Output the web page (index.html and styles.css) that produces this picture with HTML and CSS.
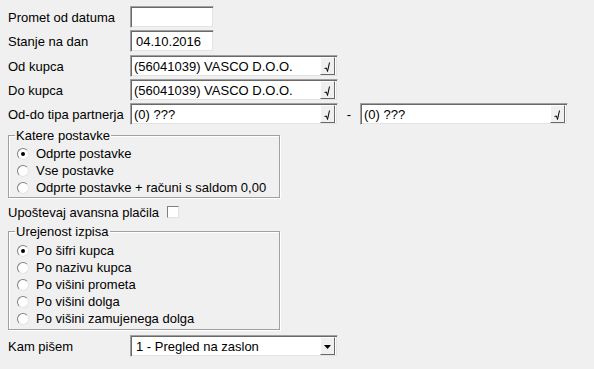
FILE: index.html
```html
<!DOCTYPE html>
<html lang="sl">
<head>
  <meta charset="UTF-8" />
  <title>Odprte postavke kupcev</title>
  <link rel="stylesheet" href="styles.css">
</head>
<body>
  <div class="form">
    <div class="row">
      <span class="label">Promet od datuma</span>
      <div class="field short"></div>
    </div>
    <div class="row">
      <span class="label">Stanje na dan</span>
      <div class="field short">04.10.2016</div>
    </div>
    <div class="row gap3">
      <span class="label">Od kupca</span>
      <div class="field combo"><span class="val">(56041039) VASCO D.O.O.</span><span class="btn"><svg width="7" height="10" viewBox="0 0 7 10"><polyline points="0.5,6.5 2.5,6 3.5,9.5 5.5,0.5" fill="none" stroke="#000" stroke-width="1"/></svg></span></div>
    </div>
    <div class="row">
      <span class="label">Do kupca</span>
      <div class="field combo"><span class="val">(56041039) VASCO D.O.O.</span><span class="btn"><svg width="7" height="10" viewBox="0 0 7 10"><polyline points="0.5,6.5 2.5,6 3.5,9.5 5.5,0.5" fill="none" stroke="#000" stroke-width="1"/></svg></span></div>
    </div>
    <div class="row">
      <span class="label">Od-do tipa partnerja</span>
      <div class="field combo"><span class="val">(0) ???</span><span class="btn"><svg width="7" height="10" viewBox="0 0 7 10"><polyline points="0.5,6.5 2.5,6 3.5,9.5 5.5,0.5" fill="none" stroke="#000" stroke-width="1"/></svg></span></div>
      <span class="dash">-</span>
      <div class="field combo"><span class="val">(0) ???</span><span class="btn"><svg width="7" height="10" viewBox="0 0 7 10"><polyline points="0.5,6.5 2.5,6 3.5,9.5 5.5,0.5" fill="none" stroke="#000" stroke-width="1"/></svg></span></div>
    </div>

    <fieldset class="group first">
      <legend>Katere postavke</legend>
      <div class="opt"><span class="radio on"></span>Odprte postavke</div>
      <div class="opt"><span class="radio"></span>Vse postavke</div>
      <div class="opt"><span class="radio"></span>Odprte postavke + računi s saldom 0,00</div>
    </fieldset>

    <div class="check-row">
      <span>Upoštevaj avansna plačila</span>
      <span class="checkbox"></span>
    </div>

    <fieldset class="group second">
      <legend>Urejenost izpisa</legend>
      <div class="opt"><span class="radio on"></span>Po šifri kupca</div>
      <div class="opt"><span class="radio"></span>Po nazivu kupca</div>
      <div class="opt"><span class="radio"></span>Po višini prometa</div>
      <div class="opt"><span class="radio"></span>Po višini dolga</div>
      <div class="opt"><span class="radio"></span>Po višini zamujenega dolga</div>
    </fieldset>

    <div class="row last">
      <span class="label">Kam pišem</span>
      <div class="field combo select"><span class="val">1 - Pregled na zaslon</span><span class="btn"><svg width="7" height="4" viewBox="0 0 7 4"><polygon points="0,0 7,0 3.5,4" fill="#000"/></svg></span></div>
    </div>
  </div>
</body>
</html>
```

FILE: styles.css
```css
body { margin: 0; background: #f0f0f0; font-family: "Liberation Sans", Arial, sans-serif; font-size: 13px; color: #000; }
.form { padding: 6px 8px; }
.row { display: flex; align-items: center; height: 22px; margin-bottom: 2px; }
.row.gap3 { margin-top: 3px; }
.label { width: 122px; flex: none; white-space: nowrap; }
.field { box-sizing: border-box; height: 22px; background: #fff; border: 1px solid; border-color: #a0a0a0 #f0f0f0 #f0f0f0 #a0a0a0; box-shadow: inset 1px 1px #696969, inset -1px -1px #e3e3e3; display: flex; align-items: center; padding-left: 3px; white-space: nowrap; }
.field.short { width: 84px; padding-left: 5px; }
.field.combo { width: 208px; padding: 2px 2px 2px 3px; }
.val { flex: 1; overflow: hidden; }
.btn { box-sizing: border-box; width: 15px; height: 18px; background: #f0f0f0; border: 1px solid; border-color: #fff #696969 #696969 #fff; display: flex; align-items: center; justify-content: center; padding-top: 2px; }
.select .btn { padding-top: 1px; }
.dash { width: 22px; text-align: center; }
.group { box-sizing: border-box; width: 272px; margin: 3px 0 0; border: 1px solid #a0a0a0; box-shadow: 1px 1px #fff, inset 1px 1px #fff; padding: 2px 6px 1px; }
.group legend { padding: 0 1px; line-height: 15px; }
.group.second { margin-top: 4px; padding-top: 3px; padding-bottom: 2px; }
.opt { display: flex; align-items: center; height: 17px; white-space: nowrap; }
.radio { box-sizing: border-box; width: 12px; height: 12px; border-radius: 50%; background: #fff; border: 1px solid; border-color: #808080 #e3e3e3 #e3e3e3 #808080; margin: 0 7px 0 2px; display: flex; align-items: center; justify-content: center; }
.radio.on::after { content: ""; width: 4px; height: 4px; border-radius: 50%; background: #000; }
.check-row { display: flex; align-items: center; height: 16px; margin-top: 6px; }
.checkbox { box-sizing: border-box; width: 12px; height: 12px; background: #fff; border: 1px solid; border-color: #808080 #e3e3e3 #e3e3e3 #808080; margin-left: 8px; }
.row.last { margin-top: 5px; }
.select .val { padding-left: 2px; }
```
